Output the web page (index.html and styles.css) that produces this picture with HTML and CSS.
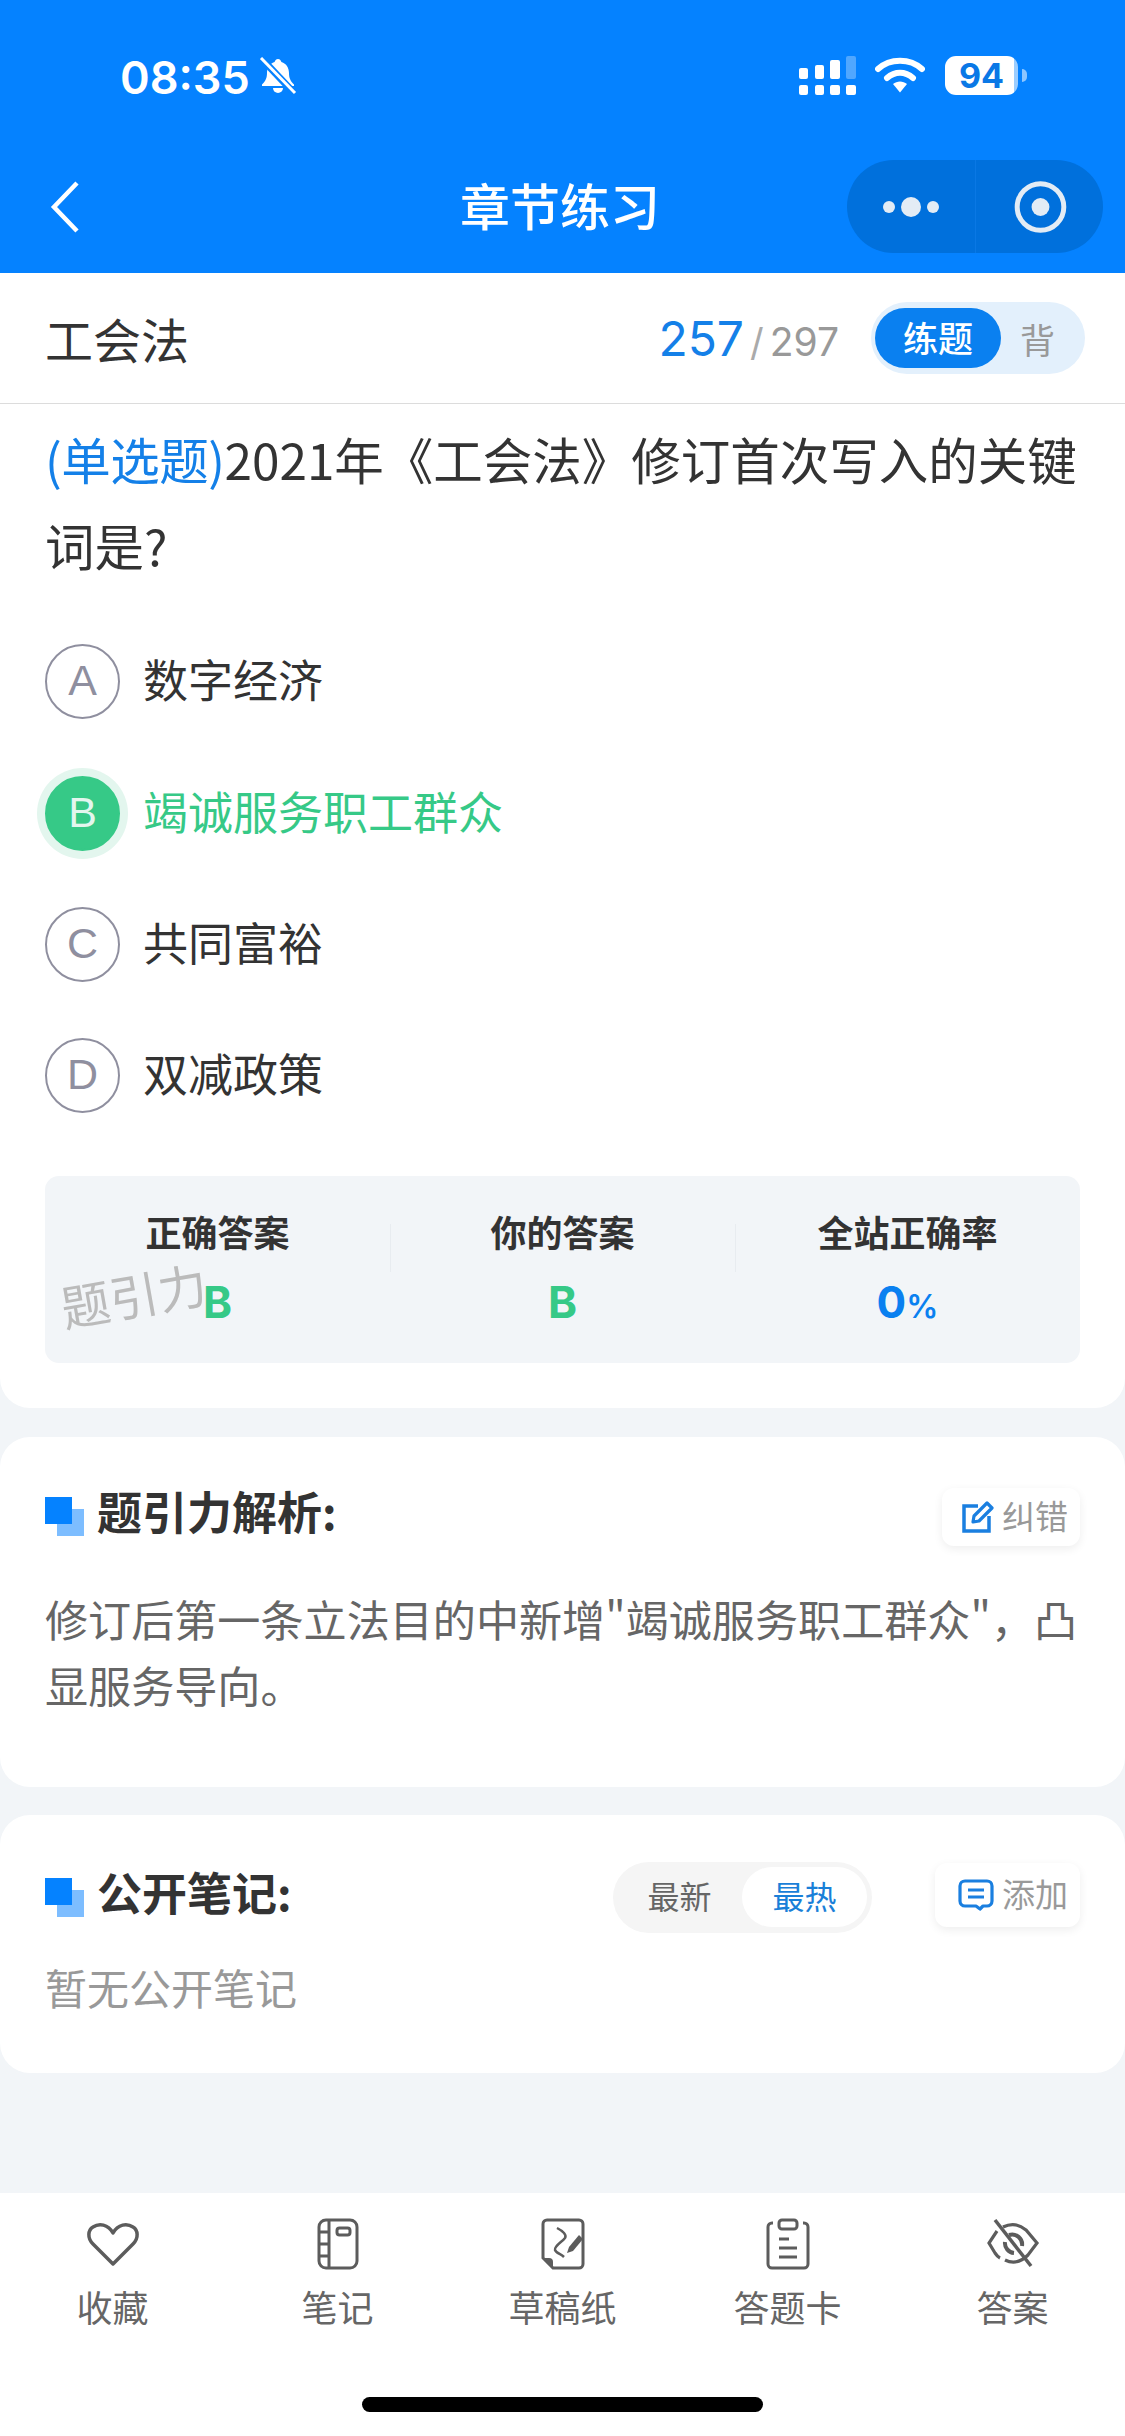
FILE: index.html
```html
<!DOCTYPE html>
<html lang="zh-CN">
<head>
    <meta charset="UTF-8">
    <meta name="viewport" content="width=device-width, initial-scale=1.0">
    <title>章节练习</title>
    <link rel="stylesheet" href="styles.css">
</head>
<body>
    <header class="top">
        <div class="statusbar">
            <div class="status-left">
                <span class="clock">08:35</span>
                <svg class="bell" width="38" height="38" viewBox="0 0 38 38">
                    <path d="M19 2c-2 0-3 1.500-3.400 3C10.500 6.500 8 11 8 16c0 5-1.500 8-5 11.500V29h32v-1.500C31.500 24 30 21 30 16c0-5-2.500-9.500-7.600-11C22 3.500 21 2 19 2z" fill="#fff"/>
                    <path d="M14 31h10a5 5 0 0 1-10 0z" fill="#fff"/>
                    <path d="M3 2l33 35" stroke="#0582ff" stroke-width="7"/>
                    <path d="M2 1l34 35" stroke="#fff" stroke-width="3"/>
                </svg>
            </div>
            <div class="status-right">
                <svg class="signal" width="57" height="39" viewBox="0 0 57 39">
                    <rect x="0" y="12" width="9" height="11" rx="2" fill="#fff"/>
                    <rect x="16" y="9" width="9" height="14" rx="2" fill="#fff"/>
                    <rect x="31" y="4" width="10" height="19" rx="2" fill="#fff"/>
                    <rect x="47" y="0" width="10" height="23" rx="2" fill="#fff" opacity="0.3"/>
                    <rect x="0" y="29" width="9" height="10" rx="2" fill="#fff"/>
                    <rect x="16" y="29" width="9" height="10" rx="2" fill="#fff"/>
                    <rect x="31" y="29" width="10" height="10" rx="2" fill="#fff"/>
                    <rect x="47" y="29" width="10" height="10" rx="2" fill="#fff"/>
                </svg>
                <svg class="wifi" width="50" height="37" viewBox="0 0 50 37">
                    <path d="M3 13C15 2 35 2 47 13" fill="none" stroke="#fff" stroke-width="6" stroke-linecap="round"/>
                    <path d="M12 22c8-7 18-7 26 0" fill="none" stroke="#fff" stroke-width="6" stroke-linecap="round"/>
                    <path d="M18 28c4-3.500 10-3.500 14 0l-7 8.500z" fill="#fff"/>
                </svg>
                <div class="battery"><span>94</span></div>
                <div class="battery-tip"></div>
            </div>
        </div>
        <div class="navbar">
            <svg class="back" width="30" height="52" viewBox="0 0 30 52">
                <path d="M27 2L4 26l23 24" fill="none" stroke="#fff" stroke-width="4.500"/>
            </svg>
            <h1>章节练习</h1>
            <div class="capsule">
                <svg class="capsule-btn" width="128" height="93" viewBox="0 0 128 93">
                    <circle cx="42" cy="47" r="6" fill="#e3ecf5"/>
                    <circle cx="64" cy="47" r="10" fill="#e3ecf5"/>
                    <circle cx="86" cy="47" r="6" fill="#e3ecf5"/>
                </svg>
                <svg class="capsule-btn capsule-right" width="128" height="93" viewBox="0 0 128 93">
                    <circle cx="65" cy="47" r="23.500" fill="none" stroke="#e3ecf5" stroke-width="5"/>
                    <circle cx="65" cy="47" r="9" fill="#e3ecf5"/>
                </svg>
            </div>
        </div>
    </header>

    <main>
        <section class="card card-question">
            <div class="subhead">
                <div class="subhead-title">工会法</div>
                <div class="progress"><span class="progress-now">257</span><span class="progress-sep">/</span><span class="progress-all">297</span></div>
                <div class="mode">
                    <span class="mode-on">练题</span>
                    <span class="mode-off">背</span>
                </div>
            </div>

            <div class="question"><span class="question-type">(单选题)</span><span class="question-text">2021年《工会法》修订首次写入的关键词是?</span></div>

            <ul class="options">
                <li class="option"><span class="letter">A</span><span class="option-text">数字经济</span></li>
                <li class="option option-on"><span class="letter">B</span><span class="option-text">竭诚服务职工群众</span></li>
                <li class="option"><span class="letter">C</span><span class="option-text">共同富裕</span></li>
                <li class="option"><span class="letter">D</span><span class="option-text">双减政策</span></li>
            </ul>

            <div class="result">
                <div class="result-col">
                    <div class="result-label">正确答案</div>
                    <div class="result-value green">B</div>
                </div>
                <div class="result-col">
                    <div class="result-label">你的答案</div>
                    <div class="result-value green">B</div>
                </div>
                <div class="result-col">
                    <div class="result-label">全站正确率</div>
                    <div class="result-value blue">0<small>%</small></div>
                </div>
                <div class="watermark">题引力</div>
            </div>
        </section>

        <section class="card card-analysis">
            <div class="card-head">
                <h2><span class="mark"></span><span class="head-text">题引力解析:</span></h2>
                <div class="chip">
                    <svg width="32" height="32" viewBox="0 0 32 32">
                        <path d="M16 5H2v25h25V15" fill="none" stroke="#1a7fe0" stroke-width="3.500"/>
                        <path d="M11 21l1-6L25 2l5 5-13 13z" fill="none" stroke="#1a7fe0" stroke-width="3.200" stroke-linejoin="round"/>
                    </svg>
                    <span class="chip-text">纠错</span>
                </div>
            </div>
            <p class="analysis-text">修订后第一条立法目的中新增"竭诚服务职工群众"，凸显服务导向。</p>
        </section>

        <section class="card card-notes">
            <div class="card-head">
                <h2><span class="mark"></span><span class="head-text">公开笔记:</span></h2>
                <div class="sort">
                    <span class="sort-item">最新</span>
                    <span class="sort-item sort-on">最热</span>
                </div>
                <div class="chip chip-add">
                    <svg width="36" height="32" viewBox="0 0 36 32">
                        <path d="M7 2h22a5 5 0 0 1 5 5v15a5 5 0 0 1-5 5h-4l-3 3-4-3H7a5 5 0 0 1-5-5V7a5 5 0 0 1 5-5z" fill="none" stroke="#1a7fe0" stroke-width="3.200" stroke-linejoin="round"/>
                        <path d="M10 11h16M10 18h16" stroke="#1a7fe0" stroke-width="3.200"/>
                    </svg>
                    <span class="chip-text">添加</span>
                </div>
            </div>
            <p class="empty">暂无公开笔记</p>
        </section>
    </main>

    <footer class="bottom">
        <nav class="tabs">
            <div class="tab">
                <svg width="54" height="52" viewBox="0 0 54 52">
                    <path d="M27 46L7 26C1 20 2 12 7 9c6-4 15-3 20 6 5-9 14-10 20-6 5 3 6 11 0 17z" fill="none" stroke="#5c5c5c" stroke-width="3.500" stroke-linejoin="round"/>
                </svg>
                <span>收藏</span>
            </div>
            <div class="tab">
                <svg width="42" height="52" viewBox="0 0 42 52">
                    <rect x="2" y="2" width="38" height="48" rx="7" fill="none" stroke="#5c5c5c" stroke-width="3"/>
                    <path d="M12 2v48M2 14h10M2 26h10M2 38h10" fill="none" stroke="#5c5c5c" stroke-width="3"/>
                    <rect x="20" y="10" width="13" height="7" rx="2.500" fill="none" stroke="#5c5c5c" stroke-width="3"/>
                </svg>
                <span>笔记</span>
            </div>
            <div class="tab">
                <svg width="44" height="52" viewBox="0 0 44 52">
                    <path d="M12 50h26a4 4 0 0 0 4-4V6a4 4 0 0 0-4-4H6a4 4 0 0 0-4 4v34z" fill="none" stroke="#5c5c5c" stroke-width="3"/>
                    <path d="M2 40h6a4 4 0 0 1 4 4v6z" fill="#5c5c5c"/>
                    <path d="M16 10c6 3 10 7 8 10-3 4-11 8-10 12 1 3 6 4 9 7" fill="none" stroke="#5c5c5c" stroke-width="2.500"/>
                    <path d="M26 35l2-6 10-12 4 4-10 12z" fill="#5c5c5c"/>
                </svg>
                <span>草稿纸</span>
            </div>
            <div class="tab">
                <svg width="44" height="52" viewBox="0 0 44 52">
                    <path d="M7 5H6a4 4 0 0 0-4 4v37a4 4 0 0 0 4 4h32a4 4 0 0 0 4-4V9a4 4 0 0 0-4-4h-1" fill="none" stroke="#5c5c5c" stroke-width="3"/>
                    <rect x="13" y="2" width="18" height="9" rx="3" fill="none" stroke="#5c5c5c" stroke-width="3"/>
                    <path d="M13 21h10M13 30h18M13 39h18" stroke="#5c5c5c" stroke-width="3"/>
                </svg>
                <span>答题卡</span>
            </div>
            <div class="tab">
                <svg width="56" height="52" viewBox="0 0 54 52">
                    <path d="M17 9c8-4 16-3 23 3l11 13-9 12c-7 7-15 9-23 5" fill="none" stroke="#5c5c5c" stroke-width="3.200"/>
                    <path d="M11 13L3 25l6 10c2 3 3 4 5 5" fill="none" stroke="#5c5c5c" stroke-width="3.200"/>
                    <path d="M23 17a10 10 0 0 1 13 11M19 24a10 10 0 0 0 9 11" fill="none" stroke="#5c5c5c" stroke-width="4"/>
                    <path d="M9 2l36 46" stroke="#5c5c5c" stroke-width="3.500"/>
                </svg>
                <span>答案</span>
            </div>
        </nav>
        <div class="home-bar"></div>
    </footer>
</body>
</html>
```

FILE: styles.css
```css
* {
    box-sizing: border-box;
}

body {
    margin: 0;
    width: 1125px;
    height: 2436px;
    display: flex;
    flex-direction: column;
    overflow: hidden;
    font-family: "Noto Sans CJK SC", "Inter", sans-serif;
    color: #333;
    background-color: #f2f5f8;
}

h1, h2, p, ul {
    margin: 0;
    padding: 0;
}

/* Top bar */
.top {
    background-color: #0582ff;
    color: white;
}

.statusbar {
    height: 140px;
    display: flex;
    justify-content: space-between;
    padding: 56px 98px 0 120px;
}

.status-left {
    display: flex;
    align-items: center;
    height: 39px;
}

.clock {
    margin-top: 3px;
    font-family: Inter, sans-serif;
    font-size: 45px;
    font-weight: 600;
    line-height: 39px;
    letter-spacing: 0;
}

.bell {
    margin-left: 9px;
}

.status-right {
    display: flex;
    align-items: flex-start;
}

.wifi {
    margin-left: 19px;
}

.battery {
    width: 73px;
    height: 39px;
    margin-left: 20px;
    background: linear-gradient(90deg, white 94%, rgba(255, 255, 255, 0.6) 94%);
    border-radius: 11px;
    color: #0a78e6;
    font-family: Inter, sans-serif;
    font-size: 34px;
    font-weight: 700;
    line-height: 39px;
    text-align: center;
}

.battery-tip {
    width: 5px;
    height: 13px;
    margin: 13px 0 0 4px;
    background-color: rgba(255, 255, 255, 0.55);
    border-radius: 0 6px 6px 0;
}

.navbar {
    height: 133px;
    display: flex;
    align-items: center;
    position: relative;
    padding-left: 50px;
}

.navbar h1 {
    position: absolute;
    left: 0;
    right: 5px;
    padding-bottom: 6px;
    text-align: center;
    font-size: 50px;
    font-weight: 500;
}

.capsule {
    display: flex;
    width: 256px;
    height: 93px;
    margin-left: auto;
    margin-right: 22px;
    background-color: #0070dc;
    border-radius: 47px;
}

.capsule-right {
    border-left: 1px solid #0a78e4;
}

/* Question card */
.card {
    background-color: white;
    border-radius: 30px;
}

.card-question {
    border-radius: 0 0 30px 30px;
    padding-bottom: 45px;
}

.subhead {
    height: 131px;
    display: flex;
    align-items: center;
    padding: 0 40px 0 45px;
    border-bottom: 1px solid #dcdcdc;
}

.subhead-title {
    font-size: 48px;
    margin-right: auto;
}

.progress {
    display: flex;
    align-items: baseline;
    font-family: Inter, sans-serif;
    margin-right: 32px;
}

.progress-now {
    font-size: 48px;
    color: #1480e8;
}

.progress-sep {
    font-size: 38px;
    color: #aaa;
    margin: 0 6px;
}

.progress-all {
    font-size: 39px;
    color: #999;
}

.mode {
    width: 214px;
    height: 72px;
    display: flex;
    align-items: center;
    padding-left: 4px;
    background-color: #e3f0fc;
    border-radius: 36px;
}

.mode-on {
    width: 126px;
    height: 60px;
    background-color: #0a80f0;
    border-radius: 30px;
    color: white;
    font-size: 35px;
    font-weight: 500;
    line-height: 58px;
    text-align: center;
}

.mode-off {
    margin-left: 19px;
    font-size: 35px;
    color: #999;
}

.question {
    padding: 12px 45px 0;
    font-size: 49.500px;
    line-height: 86px;
}

.question-type {
    color: #1480e8;
    letter-spacing: -0.500px;
}

.options {
    list-style: none;
    margin-top: 28px;
    padding: 0 45px;
}

.option {
    height: 131.400px;
    display: flex;
    align-items: center;
    font-size: 45px;
}

.option-text {
    padding-bottom: 6px;
}

.letter {
    width: 75px;
    height: 75px;
    margin-right: 23px;
    border: 2.500px solid #8f8f9f;
    border-radius: 50%;
    color: #8f8f9f;
    font-family: "Liberation Sans", sans-serif;
    font-size: 43px;
    line-height: 68px;
    text-align: center;
}

.option-on {
    color: #36c987;
}

.option-on .letter {
    border-color: #36c987;
    background-color: #36c987;
    color: #e3f6ee;
    box-shadow: 0 0 0 8px #e3f6ee;
}

.result {
    position: relative;
    display: grid;
    grid-template-columns: repeat(3, 1fr);
    height: 187px;
    margin: 34.400px 45px 0;
    padding-top: 32px;
    background-color: #f2f5f8;
    border-radius: 14px;
}

.result-col {
    position: relative;
    text-align: center;
}

.result-col + .result-col::before {
    content: "";
    position: absolute;
    left: 0;
    top: 16px;
    height: 48px;
    border-left: 1px solid #e8ecf0;
}

.result-label {
    font-size: 36px;
    font-weight: 700;
    line-height: 46px;
}

.result-value {
    margin-top: 24px;
    font-family: Inter, sans-serif;
    font-size: 44px;
    font-weight: 700;
    line-height: 48px;
}

.result-value small {
    font-size: 32px;
    font-weight: 600;
}

.green {
    color: #36c987;
}

.blue {
    color: #0a80f0;
}

.watermark {
    position: absolute;
    left: 15px;
    top: 88px;
    color: #bbb;
    font-size: 49px;
    line-height: 60px;
    transform: rotate(-10deg);
}

/* Analysis and notes */
.card-analysis {
    margin-top: 29px;
    height: 350px;
    padding: 51px 45px 0;
}

.card-notes {
    margin-top: 28px;
    height: 258px;
    padding: 47px 45px 0;
}

.card-head {
    display: flex;
    align-items: center;
}

.card-head h2 {
    display: flex;
    align-items: center;
    margin-right: auto;
    font-size: 45px;
    font-weight: 700;
    line-height: 58px;
}

.head-text {
    margin-top: -11px;
}

.mark {
    position: relative;
    width: 39px;
    height: 39px;
    margin-right: 13px;
    background: linear-gradient(#7dbdff, #7dbdff) no-repeat 12px 12px / 27px 27px;
}

.mark::before {
    content: "";
    position: absolute;
    left: 0;
    top: 0;
    width: 27px;
    height: 27px;
    background-color: #0582ff;
}

.chip {
    width: 138px;
    height: 58px;
    display: flex;
    align-items: center;
    justify-content: flex-end;
    gap: 8px;
    padding-right: 12px;
    border-radius: 12px;
    box-shadow: 0 3px 10px rgba(0, 0, 0, 0.07);
    color: #999;
    font-size: 33px;
    line-height: 46px;
}

.chip-text {
    margin-top: -4px;
}

.chip-add {
    width: 145px;
    height: 64px;
    margin-top: -4px;
}

.analysis-text {
    margin-top: 39px;
    color: #666;
    font-size: 43.100px;
    line-height: 66px;
}

.sort {
    width: 259px;
    height: 71px;
    display: flex;
    align-items: center;
    margin-right: 63px;
    padding-left: 4px;
    background-color: #f5f5f5;
    border-radius: 36px;
    font-size: 32px;
}

.sort-item {
    width: 125px;
    height: 60px;
    line-height: 56px;
    text-align: center;
    color: #666;
}

.sort-on {
    background-color: white;
    border-radius: 30px;
    color: #1a7fd8;
}

.empty {
    margin-top: 25px;
    color: #999;
    font-size: 42px;
    line-height: 58px;
}

/* Bottom bar */
.bottom {
    height: 243px;
    margin-top: auto;
    display: flex;
    flex-direction: column;
    background-color: white;
}

.tabs {
    display: grid;
    grid-template-columns: repeat(5, 225px);
    padding-top: 25px;
}

.tab {
    display: flex;
    flex-direction: column;
    align-items: center;
    color: #666;
    font-size: 36px;
    line-height: 48px;
}

.tab span {
    margin-top: 12px;
}

.home-bar {
    width: 401px;
    height: 15px;
    margin: auto auto 24px;
    background-color: black;
    border-radius: 8px;
}
```
